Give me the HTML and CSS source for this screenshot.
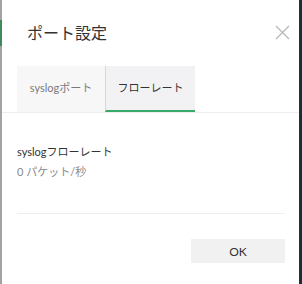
FILE: index.html
```html
<!DOCTYPE html>
<html lang="ja">
<head>
    <meta charset="UTF-8">
    <title>ポート設定</title>
    <link rel="stylesheet" href="styles.css">
</head>
<body>
    <div class="frame">
        <div class="edge"><span class="edge-mark"></span></div>
        <div class="dialog">
            <div class="header">
                <h2 class="title">ポート設定</h2>
                <svg class="close" width="15" height="15" viewBox="0 0 15 15">
                    <path d="M1 1L14 14M14 1L1 14" stroke="#b5b5b5" stroke-width="1.2" fill="none"/>
                </svg>
            </div>
            <div class="tabs">
                <div class="tab">syslogポート</div>
                <div class="tab active">フローレート</div>
            </div>
            <div class="content">
                <div class="label">syslogフローレート</div>
                <div class="value">0 パケット/秒</div>
            </div>
            <div class="footer">
                <button class="ok">OK</button>
            </div>
        </div>
        <div class="side"></div>
    </div>
</body>
</html>
```

FILE: styles.css
```css
body {
    margin: 0;
    background: #fff;
    font-family: Lato, "Noto Sans CJK JP", sans-serif;
    color: #333;
}
.frame {
    display: flex;
    width: 302px;
    height: 284px;
    overflow: hidden;
}
.edge {
    width: 2px;
    background: #a3a3a3;
    display: flex;
    flex-direction: column;
}
.edge-mark {
    margin-top: 20px;
    height: 26px;
    background: #3e8a5a;
}
.dialog {
    flex: 1;
    display: flex;
    flex-direction: column;
}
.side {
    width: 3px;
    background: #1f2d3a;
}
.header {
    display: flex;
    align-items: center;
    justify-content: space-between;
    padding: 21px 9px 0 25px;
    height: 22px;
}
.title {
    margin: 0;
    font-size: 16px;
    font-weight: normal;
    color: #333;
}
.close {
    margin-top: 1px;
}
.tabs {
    display: flex;
    margin-top: 23px;
    padding-left: 15px;
    border-bottom: 1px solid #eee;
}
.tab {
    width: 88px;
    height: 44px;
    line-height: 44px;
    text-align: center;
    font-size: 11px;
    color: #7a7a7a;
    background: #f7f7f8;
    border-bottom: 2px solid transparent;
}
.tab.active {
    width: 89px;
    color: #333;
    background: #f2f2f4;
    border-left: 1px solid #d8d8d8;
    border-bottom-color: #3aaa6a;
}
.content {
    padding-top: 30px;
    height: 70px;
    border-bottom: 1px solid #eee;
    margin: 0 14px 0 15px;
}
.label {
    font-size: 11px;
    color: #333;
}
.value {
    margin-top: 4px;
    font-size: 11px;
    color: #888;
}
.footer {
    display: flex;
    justify-content: flex-end;
    padding: 25px 14px 0 0;
}
.ok {
    width: 94px;
    height: 24px;
    border: none;
    background: #f1f1f1;
    font-family: Lato, "Noto Sans CJK JP", sans-serif;
    font-size: 12px;
    color: #333;
}
```
